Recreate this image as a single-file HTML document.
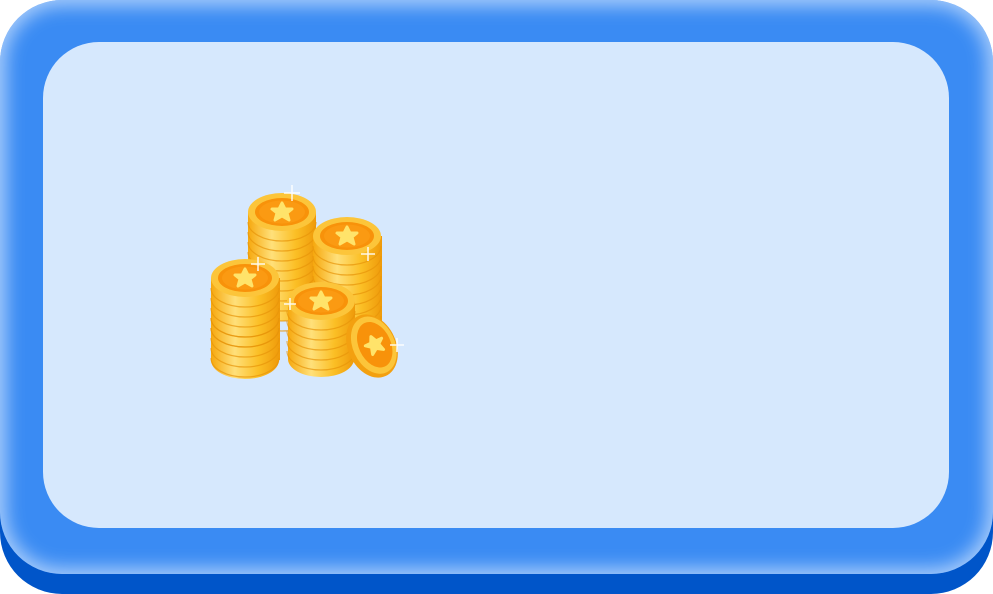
<!DOCTYPE html><html><head><style>
body{margin:0;width:993px;height:594px;background:#fff;overflow:hidden;position:relative}
.b{position:absolute;left:0;top:20px;width:993px;height:574px;border-radius:62px;background:#0055c9}
.t{position:absolute;left:0;top:0;width:993px;height:574px;border-radius:62px;background:#3a8bf3;box-shadow:inset 0 0 18px 6px #a9cdfb}
.p{position:absolute;left:43px;top:42px;width:906px;height:486px;border-radius:56px;background:#d6e8fd}
</style></head><body>
<div class="b"></div><div class="t"></div><div class="p"></div>
<svg style="position:absolute;left:0;top:0" width="993" height="594">
<defs>
<linearGradient id="g" x1="0" x2="1"><stop offset="0" stop-color="#f6a80e"/><stop offset=".35" stop-color="#ffe07a"/><stop offset=".7" stop-color="#fbbf25"/><stop offset="1" stop-color="#ef9a0a"/></linearGradient>
<g id="top"><ellipse rx="34" ry="19" fill="#fcc53a"/><ellipse rx="27" ry="14" fill="#f8920a"/><ellipse rx="23" ry="11.5" fill="#fb9a12"/><path d="M0,-9 L3,-3 L10,-3 L5,1 L7,8 L0,4 L-7,8 L-5,1 L-10,-3 L-3,-3Z" fill="#ffe36a" stroke="#ffe36a" stroke-linejoin="round" stroke-width="3"/></g>
<g id="r5" fill="none" stroke="#e8950a" stroke-width="1.2" opacity=".7">
<path d="M-34,10 A34,19 0 0 0 34,10"/><path d="M-34,20 A34,19 0 0 0 34,20"/><path d="M-34,30 A34,19 0 0 0 34,30"/><path d="M-34,40 A34,19 0 0 0 34,40"/><path d="M-34,50 A34,19 0 0 0 34,50"/></g>
<g id="rid"><use href="#r5"/><use href="#r5" y="50"/></g>
<clipPath id="c1"><rect x="200" y="180" width="300" height="210"/></clipPath>
</defs>
<rect x="248" y="212" width="68" height="90" fill="url(#g)"/>
<ellipse cx="282" cy="302" rx="34" ry="19" fill="url(#g)"/>
<use href="#rid" x="282" y="212"/>
<use href="#top" x="282" y="212"/>
<rect x="313" y="236" width="69" height="95" fill="url(#g)"/>
<ellipse cx="347" cy="331" rx="34" ry="19" fill="url(#g)"/>
<use href="#rid" x="347" y="236"/>
<use href="#top" x="347" y="236"/>
<rect x="211" y="278" width="69" height="82" fill="url(#g)"/>
<ellipse cx="245" cy="360" rx="34" ry="19" fill="url(#g)"/>
<use href="#r5" x="245" y="278"/><use href="#r5" x="245" y="308"/>
<use href="#top" x="245" y="278"/>
<rect x="288" y="301" width="67" height="58" fill="url(#g)"/>
<ellipse cx="321" cy="359" rx="33" ry="18" fill="url(#g)"/>
<use href="#r5" x="321" y="301"/>
<use href="#top" x="321" y="301"/>
<g transform="translate(372,346) rotate(-25)"><ellipse rx="24" ry="33" fill="#f3a010"/><ellipse cx="2" rx="21" ry="30" fill="#fcc53a"/><ellipse cx="3" rx="16" ry="24" fill="#f8920a"/><path d="M3,-9 L6,-3 L12,-3 L7,1 L9,8 L3,4 L-3,8 L-1,1 L-6,-3 L0,-3Z" fill="#ffe36a" stroke="#ffe36a" stroke-width="3" stroke-linejoin="round"/></g>
<g stroke="#fff" stroke-width="1.5" opacity=".9"><path d="M292,185v16M284,193h16M258,257v14M251,264h14M368,247v14M361,254h14M290,298v12M284,304h12M397,338v14M390,345h14"/></g>
</svg>
</body></html>
